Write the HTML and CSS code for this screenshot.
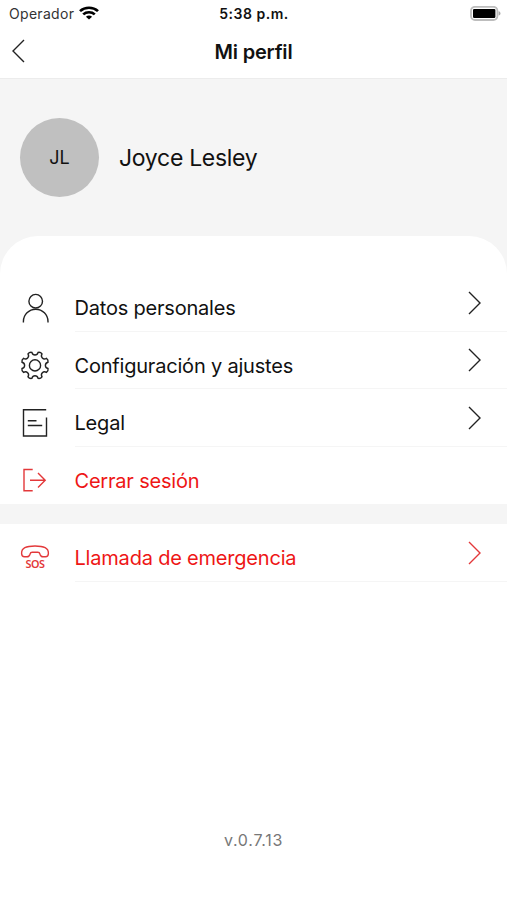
FILE: index.html
```html
<!DOCTYPE html>
<html lang="es">
<head>
    <meta charset="UTF-8">
    <meta name="viewport" content="width=device-width, initial-scale=1.0">
    <title>Mi perfil</title>
    <link rel="stylesheet" href="styles.css">
</head>
<body>
    <div class="status-bar">
        <div class="carrier">
            <span>Operador</span>
            <svg class="wifi" width="20" height="14" viewBox="0 0 18 14" preserveAspectRatio="none" fill="none" stroke="#000" stroke-width="2.4">
                <path d="M.9 5.1a11.6 11.6 0 0 1 16.2 0"/>
                <path d="M3.8 8.4a7.4 7.4 0 0 1 10.4 0"/>
                <path d="M9 13.6L6.2 10.8a4 4 0 0 1 5.6 0z" fill="#000" stroke="none"/>
            </svg>
        </div>
        <div class="time">5:38 p.m.</div>
        <svg class="battery" width="31" height="15" viewBox="0 0 31 15">
            <rect x="1" y=".8" width="26.4" height="13.2" rx="4" fill="#fff" stroke="#bdbdbd" stroke-width="1.8"/>
            <rect x="3" y="2.9" width="22.4" height="9" rx="1.2" fill="#000"/>
            <path d="M28.6 5.2v4.4c1.2-.4 1.9-1.2 1.9-2.2s-.7-1.8-1.9-2.2z" fill="#a8a8a8"/>
        </svg>
    </div>

    <div class="nav-bar">
        <svg class="back" width="14" height="24" viewBox="0 0 14 24" fill="none" stroke="#222" stroke-width="1.4">
            <path d="M13 1L2 12l11 11"/>
        </svg>
        <h1>Mi perfil</h1>
    </div>

    <div class="profile">
        <div class="avatar">JL</div>
        <div class="name">Joyce Lesley</div>
    </div>

    <div class="sheet">
        <div class="menu">
            <a class="item">
                <svg class="icon" width="30" height="30" viewBox="-15 -15 30 30">
                    <circle cx=".7" cy="-6.8" r="6.8"/>
                    <path d="M-11.6 14.5v-1a12.3 12.3 0 0 1 24.6 0v1"/>
                </svg>
                <span class="label">Datos personales</span>
                <svg class="chevron" width="14" height="24" viewBox="0 0 14 24"><path d="M1 1l11 11L1 23"/></svg>
            </a>
            <a class="item">
                <svg class="icon" width="30" height="30" viewBox="-15 -15.4 30 30">
                    <circle cx="0" cy="0" r="5.6"/>
                    <path d="M13.03 3.13Q13.5 5.6 11.43 7C8.27 5.16 5.16 8.27 7 11.43Q5.6 13.5 3.13 13.03C2.2 9.5-2.2 9.5-3.13 13.03Q-5.6 13.5-7 11.43C-5.16 8.27-8.27 5.16-11.43 7Q-13.5 5.6-13.03 3.13C-9.5 2.2-9.5-2.2-13.03-3.13Q-13.5-5.6-11.43-7C-8.27-5.16-5.16-8.27-7-11.43Q-5.6-13.5-3.13-13.03C-2.2-9.5 2.2-9.5 3.13-13.03Q5.6-13.5 7-11.43C5.16-8.27 8.27-5.16 11.43-7Q13.5-5.6 13.03-3.13C9.5-2.2 9.5 2.2 13.03 3.13z"/>
                </svg>
                <span class="label">Configuración y ajustes</span>
                <svg class="chevron" width="14" height="24" viewBox="0 0 14 24"><path d="M1 1l11 11L1 23"/></svg>
            </a>
            <a class="item">
                <svg class="icon" width="30" height="30" viewBox="-15 -15 30 30">
                    <path d="M11.2-13.2h-22.7v26.2h23v-18.5"/>
                    <path d="M-7.2-2.3h8.7M-7.2 2.5h14.4"/>
                </svg>
                <span class="label">Legal</span>
                <svg class="chevron" width="14" height="24" viewBox="0 0 14 24"><path d="M1 1l11 11L1 23"/></svg>
            </a>
            <a class="item danger last">
                <svg class="icon" width="30" height="30" viewBox="-15 -15 30 30">
                    <path d="M-2.3-10.5h-8.7v21.2h8.7"/>
                    <path d="M-5 .2h15M3-7l7.200 7.200L3 7.400"/>
                </svg>
                <span class="label">Cerrar sesión</span>
            </a>
        </div>

        <div class="menu">
            <a class="item danger">
                <svg class="icon" width="30" height="30" viewBox="-15 -15 30 30">
                    <path d="M-13.4-4.5C-13.6-10-9-12 0-12S13.600-10 13.400-4.500C13.300-2 12-1.200 10.500-1.200H8C6-1.200 5.500-2 5-3.800 4.600-5.400 4-5.700 2.800-5.700h-5.600C-4-5.700-4.600-5.400-5-3.800-5.500-2-6-1.200-8-1.200h-2.500c-1.500 0-2.800-.8-2.900-3.300z"/>
                    <text class="sos" x="0" y="10.400" text-anchor="middle">SOS</text>
                </svg>
                <span class="label">Llamada de emergencia</span>
                <svg class="chevron" width="14" height="24" viewBox="0 0 14 24"><path d="M1 1l11 11L1 23"/></svg>
            </a>
        </div>
    </div>

    <div class="version">v.0.7.13</div>
</body>
</html>
```

FILE: styles.css
```css
* {
    box-sizing: border-box;
}

body {
    margin: 0;
    height: 900px;
    display: flex;
    flex-direction: column;
    font-family: Inter, "Liberation Sans", sans-serif;
    background-color: #fff;
    color: #111;
    overflow: hidden;
}

.status-bar {
    height: 27px;
    padding: 0 6px 0 9px;
    display: grid;
    grid-template-columns: 1fr auto 1fr;
    align-items: center;
    font-size: 14px;
}

.carrier {
    display: flex;
    align-items: center;
    gap: 5px;
    color: #333;
    letter-spacing: 0.3px;
}

.wifi {
    margin-top: -2px;
}

.time {
    margin-left: -2px;
    font-weight: 600;
    letter-spacing: 0.5px;
}

.battery {
    justify-self: end;
    margin-top: -1px;
}

.nav-bar {
    height: 52px;
    padding: 0 11px 3px;
    display: grid;
    grid-template-columns: 1fr auto 1fr;
    align-items: center;
    border-bottom: 1px solid #ececec;
}

.nav-bar h1 {
    margin: 0;
    padding-top: 1px;
    font-size: 20px;
    font-weight: 600;
    letter-spacing: -0.2px;
}

.profile {
    height: 157px;
    padding: 0 20px 1px;
    display: flex;
    align-items: center;
    gap: 20px;
    background-color: #f5f5f5;
}

.avatar {
    width: 79px;
    height: 79px;
    border-radius: 50%;
    display: flex;
    align-items: center;
    justify-content: center;
    padding-top: 1px;
    background-color: #c0c0c0;
    font-size: 18px;
}

.name {
    padding-top: 2px;
    font-size: 23px;
    letter-spacing: -0.3px;
}

.sheet {
    background-color: #f5f5f5;
}

.menu {
    background-color: #fff;
}

.menu:first-child {
    padding-top: 38px;
    border-radius: 38px 38px 0 0;
}

.menu + .menu {
    margin-top: 20px;
}

.item {
    height: 57.5px;
    padding: 0 25px 0 20px;
    display: grid;
    grid-template-columns: 30px 1fr 14px;
    column-gap: 25px;
    align-items: center;
    /* divider starts under the label */
    background: linear-gradient(#f5f5f5, #f5f5f5) 75px 100% / 100% 1px no-repeat;
}

.item.last {
    background: none;
}

.icon,
.chevron {
    fill: none;
    stroke: #222;
    stroke-width: 1.4;
}

.icon {
    margin-top: 10px;
}

.label {
    margin-left: -0.5px;
    padding-top: 11px;
    font-size: 20px;
    letter-spacing: -0.2px;
}

.danger {
    color: #ee1616;
}

.danger .icon,
.danger .chevron {
    stroke: #e3383a;
}

.icon .sos {
    font-family: "Noto Sans", sans-serif;
    font-size: 10.8px;
    font-weight: 600;
    letter-spacing: -0.4px;
    fill: #e3383a;
    stroke: none;
}

.version {
    margin-top: auto;
    padding-bottom: 50px;
    text-align: center;
    font-size: 16px;
    letter-spacing: 0.75px;
    color: #777;
}
```
